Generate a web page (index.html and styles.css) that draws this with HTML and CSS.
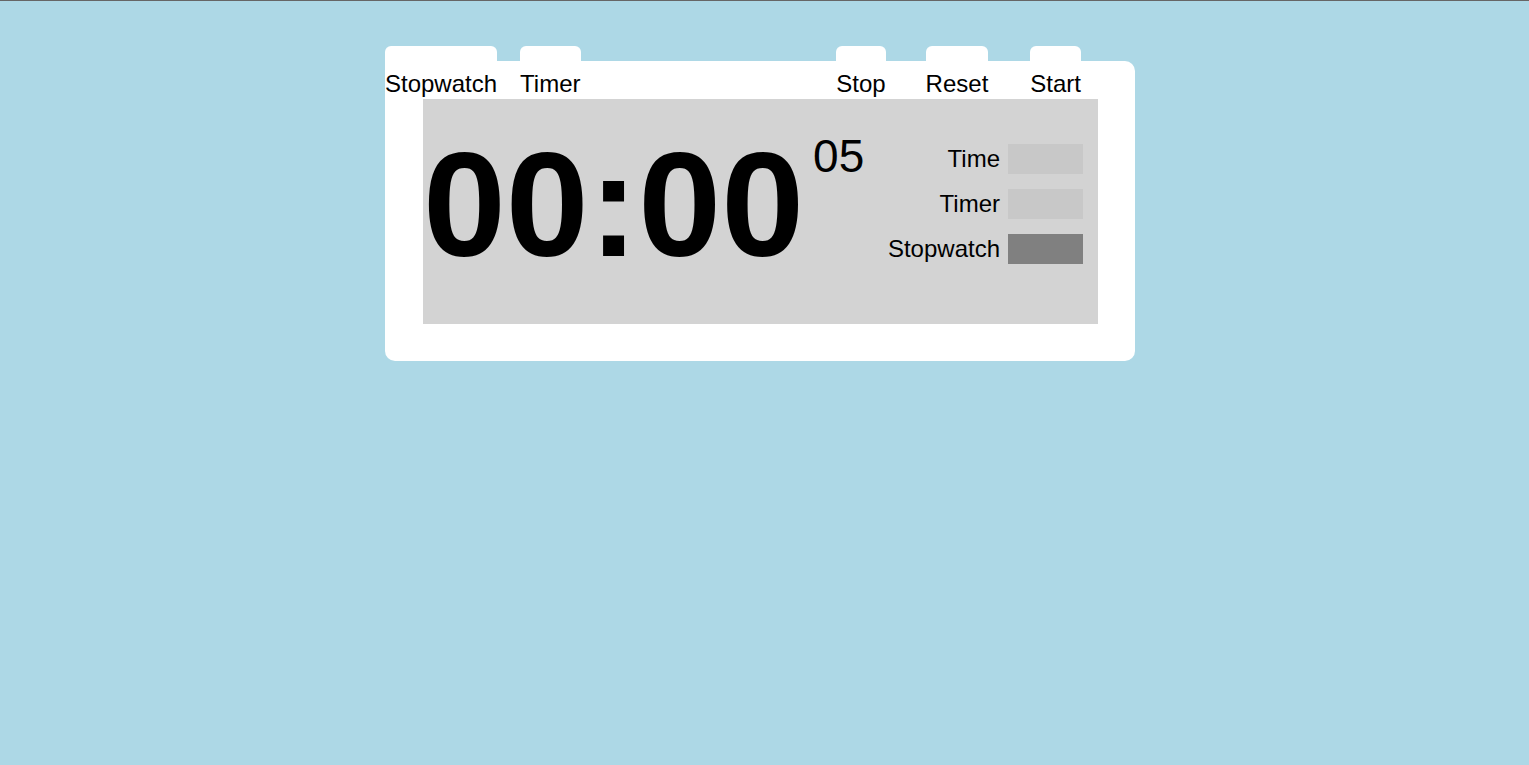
FILE: index.html
```html
<!DOCTYPE html>
<html>
<head>
<meta charset="utf-8">
<title>Stopwatch</title>
<link rel="stylesheet" href="styles.css">
</head>
<body>
<div class="card">
  <div class="tabs">
    <div class="tab">Stopwatch</div>
    <div class="tab tab-timer">Timer</div>
    <div class="tab tab-stop">Stop</div>
    <div class="tab tab-reset">Reset</div>
    <div class="tab tab-start">Start</div>
  </div>
  <div class="panel">
    <div class="time">00:00</div>
    <div class="sub">05</div>
    <div class="modes">
      <div class="mode"><span class="label">Time</span><span class="box"></span></div>
      <div class="mode"><span class="label">Timer</span><span class="box"></span></div>
      <div class="mode"><span class="label">Stopwatch</span><span class="box active"></span></div>
    </div>
  </div>
</div>
</body>
</html>
```
FILE: styles.css
```css
html, body {
  margin: 0;
  padding: 0;
}
body {
  background: #add8e6;
  border-top: 1px solid #666666;
  min-height: 764px;
  font-family: "Liberation Sans", Arial, sans-serif;
  color: #000;
}
.card {
  display: flow-root;
  margin: 60px 0 0 385px;
  width: 750px;
  height: 300px;
  box-sizing: border-box;
  background: #fff;
  border-radius: 10px;
  padding-bottom: 37px;
}
.tabs {
  display: flex;
  margin-top: -15px;
  padding-right: 54px;
  height: 53px;
}
.tab {
  background: #fff;
  border-radius: 6px 6px 0 0;
  font-size: 24px;
  line-height: 30px;
  padding-top: 23px;
}
.tab-timer { margin-left: 23px; }
.tab-stop { margin-left: auto; }
.tab-reset { margin-left: 40px; }
.tab-start { margin-left: 42px; }
.panel {
  margin: 0 37px 0 38px;
  height: 225px;
  background: #d3d3d3;
  display: flex;
  align-items: flex-start;
}
.time {
  font-size: 149px;
  font-weight: bold;
  margin-top: 20px;
  line-height: normal;
}
.sub {
  font-size: 46px;
  line-height: normal;
  margin-top: 30px;
  margin-left: 9px;
}
.modes {
  margin-left: auto;
  padding: 45px 15px 0 0;
  display: flex;
  flex-direction: column;
  gap: 15px;
}
.mode {
  display: flex;
  justify-content: flex-end;
  align-items: center;
  gap: 8px;
}
.label {
  font-size: 24px;
  line-height: 30px;
}
.box {
  width: 75px;
  height: 30px;
  background: #c8c8c8;
}
.box.active {
  background: #808080;
}
```
